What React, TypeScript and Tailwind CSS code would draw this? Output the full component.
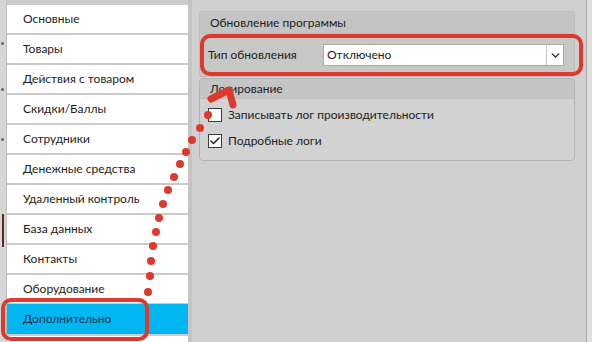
import { Check, ChevronDown } from "lucide-react";

const menu = [
  "Основные",
  "Товары",
  "Действия с товаром",
  "Скидки/Баллы",
  "Сотрудники",
  "Денежные средства",
  "Удаленный контроль",
  "База данных",
  "Контакты",
  "Оборудование",
];

const dots: [number, number][] = [
  [148, 292], [150, 276], [151, 261], [153, 246], [156, 232], [159, 218],
  [163, 204], [168, 190], [174, 177], [180, 164], [186, 152], [192, 140],
  [200, 128], [208, 115],
];

const CheckRow = ({ label, checked }: { label: string; checked?: boolean }) => (
  <div className="flex items-center gap-[6px] h-[26px]">
    <div className="w-[14px] h-[14px] bg-white border border-[#3a3a3a] flex items-center justify-center">
      {checked && <Check className="w-[12px] h-[12px] text-[#222]" strokeWidth={3} />}
    </div>
    <span>{label}</span>
  </div>
);

export default function App() {
  return (
    <div
      className="relative w-[592px] h-[342px] overflow-hidden bg-[#d0d0d0] flex text-[12px] text-[#222]"
      style={{ fontFamily: "Lato, 'Noto Sans', sans-serif" }}
    >
      {/* left edge of the window behind */}
      <div className="relative w-[7px] bg-[#d6d6d6] border-r border-[#bdbdbd]">
        <div className="absolute left-[1px] top-[42px] w-[3px] h-[3px] rounded-full bg-[#666]" />
        <div className="absolute left-[1px] top-[88px] w-[3px] h-[3px] rounded-full bg-[#666]" />
        <div className="absolute left-[1px] top-[138px] w-[3px] h-[3px] rounded-full bg-[#666]" />
        <div className="absolute left-[2px] top-[214px] w-[2px] h-[33px] bg-[#5a2a22]" />
      </div>

      {/* sidebar */}
      <ul className="w-[181px] pt-[5px] flex flex-col gap-[2px] bg-[#cbcbcb]">
        {menu.map((item) => (
          <li key={item} className="h-[28px] bg-white flex items-center pl-[16px]">
            {item}
          </li>
        ))}
        <li className="h-[30px] -mt-[1px] bg-[#00b6f1] flex items-center pl-[16px] text-[#1c2c46]">
          Дополнительно
        </li>
        <li className="flex-1 bg-white" />
      </ul>
      <div className="w-[4px] bg-[#c4c4c4]" />

      {/* settings panel */}
      <div className="flex-1 pl-[7px] pr-[11px] pt-[11px] flex flex-col gap-[1px]">
        <div className="rounded-[3px] border border-[#bcbcbc] bg-[#c7c7c7] overflow-hidden">
          <div className="h-[22px] flex items-center px-[10px] bg-[#c4c4c4] border-b border-[#bdbdbd]">
            Обновление программы
          </div>
          <div className="h-[42px] flex items-center pl-[8px] pr-[10px]">
            <span className="w-[115px]">Тип обновления</span>
            <div className="flex-1 h-[22px] bg-white border border-[#a9a9a9] flex items-center">
              <span className="flex-1 pl-[3px]">Отключено</span>
              <div className="w-[17px] h-full border-l border-[#c8c8c8] flex items-center justify-center">
                <ChevronDown className="w-[13px] h-[13px] text-[#222]" strokeWidth={2.5} />
              </div>
            </div>
          </div>
        </div>

        <div className="rounded-[4px] border border-[#b4b4b4] bg-[#d2d2d2] overflow-hidden">
          <div className="h-[20px] flex items-center px-[10px] bg-[#c5c5c5] border-b border-[#bdbdbd]">
            Логирование
          </div>
          <div className="pl-[8px] pt-[3px] pb-[6px] flex flex-col">
            <CheckRow label="Записывать лог производительности" />
            <CheckRow label="Подробные логи" checked />
          </div>
        </div>
      </div>

      {/* edge of neighbouring window */}
      <div className="w-[6px] border-l border-[#a9a9a9] bg-[#dedede]" />

      {/* annotations */}
      <svg className="absolute inset-0 pointer-events-none" width={592} height={342}>
        <rect x={3} y={300} width={144} height={39} rx={8} fill="none" stroke="#dc3a2f" strokeWidth={4} />
        <rect x={202} y={36} width={379} height={38} rx={8} fill="none" stroke="#dc3a2f" strokeWidth={4} />
        {dots.map(([cx, cy]) => (
          <circle key={`${cx}-${cy}`} cx={cx} cy={cy} r={4} fill="#dc3a2f" />
        ))}
        <polyline
          points="211,99 229,90 233,105"
          fill="none"
          stroke="#dc3a2f"
          strokeWidth={7}
          strokeLinecap="round"
          strokeLinejoin="round"
        />
      </svg>
    </div>
  );
}
